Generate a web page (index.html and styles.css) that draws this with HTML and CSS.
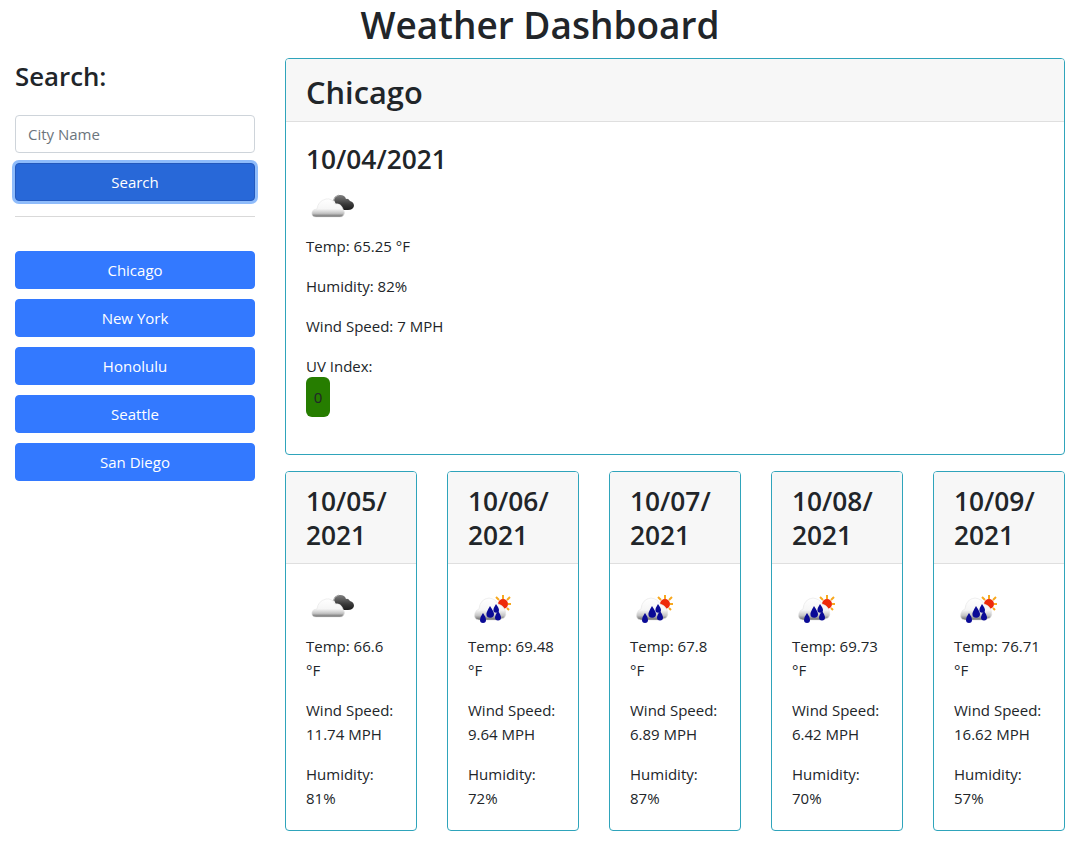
FILE: index.html
```html
<!DOCTYPE html>
<html lang="en">
<head>
    <meta charset="UTF-8">
    <meta name="viewport" content="width=device-width, initial-scale=1.0">
    <title>Weather Dashboard</title>
    <link rel="stylesheet" href="styles.css">
</head>
<body>
    <svg class="defs" width="0" height="0">
        <defs>
            <linearGradient id="cloud-fill" x1="0" y1="0" x2="0" y2="1">
                <stop offset="0" stop-color="#ffffff"/>
                <stop offset="0.55" stop-color="#f6f6f6"/>
                <stop offset="0.8" stop-color="#c4c4c4"/>
                <stop offset="1" stop-color="#666666"/>
            </linearGradient>
            <linearGradient id="dark-fill" x1="0" y1="0" x2="0" y2="1">
                <stop offset="0" stop-color="#808080"/>
                <stop offset="0.6" stop-color="#3a3a3a"/>
                <stop offset="1" stop-color="#1c1c1c"/>
            </linearGradient>
            <symbol id="icon-cloudy" viewBox="0 0 50 50">
                <path d="M28 16 Q29 11 34 11 Q39 11 40 15 Q42 14 44 17 Q48 18 48 22 Q47 26 42 26 L34 26 Q30 22 28 16 Z" fill="url(#dark-fill)"/>
                <path d="M27 17 Q28 12 33 11" fill="none" stroke="#aaaaaa" stroke-width="1"/>
                <path d="M10 33 Q5 33 6 28 Q7 25 11 25 Q12 17 20 15 Q26 14 29 20 Q35 19 37 25 Q40 29 37 32 Q36 33 34 33 Z" fill="url(#cloud-fill)" stroke="#e4e4e4" stroke-width="0.6"/>
            </symbol>
            <symbol id="icon-rain" viewBox="0 0 50 50">
                <g stroke="#f7a81f" stroke-width="2">
                    <path d="M35 11 V15 M42 13 L39 16 M43 20 H40 M41 26 L39 24 M28 13 L31 16"/>
                </g>
                <circle cx="35" cy="20" r="5" fill="#ee2a0a"/>
                <path d="M11 36 Q5 35 7 29 Q8 26 11 25 Q12 15 21 14 Q28 15 30 20 Q35 21 37 26 Q39 31 36 34 L30 36 Z" fill="url(#cloud-fill)" stroke="#e4e4e4" stroke-width="0.6"/>
                <path d="M22 22 Q26 28 26 30 A3.8 3.8 0 0 1 18.4 30 Q18.4 28 22 22 Z" fill="#0a0a96"/>
                <path d="M28 20 Q31 24 31 26 A2.6 2.6 0 0 1 25.4 26 Q25.4 24 28 20 Z" fill="#0a0a96"/>
                <path d="M15 29 Q18 33 18 36 A3 3 0 0 1 12 36 Q12 33 15 29 Z" fill="#0a0a96"/>
                <path d="M30 27 Q33 31 33 33.5 A3 3 0 0 1 27 33.5 Q27 31 30 27 Z" fill="#0a0a96"/>
            </symbol>
        </defs>
    </svg>

    <h1 class="page-title">Weather Dashboard</h1>

    <div class="layout">
        <aside class="sidebar">
            <h2 class="search-title">Search:</h2>
            <input class="city-input" type="text" placeholder="City Name">
            <button class="btn btn-search">Search</button>
            <hr class="divider">
            <div class="history">
                <button class="btn">Chicago</button>
                <button class="btn">New York</button>
                <button class="btn">Honolulu</button>
                <button class="btn">Seattle</button>
                <button class="btn">San Diego</button>
            </div>
        </aside>

        <main class="content">
            <section class="card">
                <div class="card-header"><h2>Chicago</h2></div>
                <div class="card-body today">
                    <h3>10/04/2021</h3>
                    <svg class="icon"><use href="#icon-cloudy"/></svg>
                    <p>Temp: 65.25 °F</p>
                    <p>Humidity: 82%</p>
                    <p>Wind Speed: 7 MPH</p>
                    <p class="uv-label">UV Index:</p>
                    <span class="uv-badge">0</span>
                </div>
            </section>

            <div class="forecast">
                <section class="card">
                    <div class="card-header"><h3>10/05/ 2021</h3></div>
                    <div class="card-body">
                        <svg class="icon"><use href="#icon-cloudy"/></svg>
                        <p>Temp: 66.6 °F</p>
                        <p>Wind Speed: 11.74 MPH</p>
                        <p>Humidity: 81%</p>
                    </div>
                </section>
                <section class="card">
                    <div class="card-header"><h3>10/06/ 2021</h3></div>
                    <div class="card-body">
                        <svg class="icon"><use href="#icon-rain"/></svg>
                        <p>Temp: 69.48 °F</p>
                        <p>Wind Speed: 9.64 MPH</p>
                        <p>Humidity: 72%</p>
                    </div>
                </section>
                <section class="card">
                    <div class="card-header"><h3>10/07/ 2021</h3></div>
                    <div class="card-body">
                        <svg class="icon"><use href="#icon-rain"/></svg>
                        <p>Temp: 67.8 °F</p>
                        <p>Wind Speed: 6.89 MPH</p>
                        <p>Humidity: 87%</p>
                    </div>
                </section>
                <section class="card">
                    <div class="card-header"><h3>10/08/ 2021</h3></div>
                    <div class="card-body">
                        <svg class="icon"><use href="#icon-rain"/></svg>
                        <p>Temp: 69.73 °F</p>
                        <p>Wind Speed: 6.42 MPH</p>
                        <p>Humidity: 70%</p>
                    </div>
                </section>
                <section class="card">
                    <div class="card-header"><h3>10/09/ 2021</h3></div>
                    <div class="card-body">
                        <svg class="icon"><use href="#icon-rain"/></svg>
                        <p>Temp: 76.71 °F</p>
                        <p>Wind Speed: 16.62 MPH</p>
                        <p>Humidity: 57%</p>
                    </div>
                </section>
            </div>
        </main>
    </div>
</body>
</html>
```

FILE: styles.css
```css
* {
    box-sizing: border-box;
}

body {
    margin: 0;
    font-family: "Open Sans", "Noto Sans", sans-serif;
    font-size: 15px;
    line-height: 24px;
    color: #212529;
    background-color: #ffffff;
}

h1, h2, h3, p {
    margin: 0;
    font-weight: 600;
}

.defs {
    display: block;
}

.page-title {
    font-size: 37px;
    line-height: 50px;
    text-align: center;
    margin-bottom: 8px;
    padding-left: 2px;
}

.layout {
    display: flex;
    padding: 0 13px 0 15px;
    gap: 30px;
}

.sidebar {
    width: 240px;
    flex-shrink: 0;
}

.search-title {
    font-size: 25.8px;
    line-height: 36px;
    margin-bottom: 21px;
}

.city-input {
    display: block;
    width: 100%;
    height: 38px;
    padding: 6px 12px;
    font: inherit;
    color: #495057;
    border: 1px solid #ced4da;
    border-radius: 4px;
}

.city-input::placeholder {
    color: #6c757d;
    opacity: 1;
}

.btn {
    display: block;
    width: 100%;
    height: 38px;
    font: inherit;
    color: #ffffff;
    background-color: #3379ff;
    border: 1px solid #3379ff;
    border-radius: 4px;
}

.btn-search {
    margin-top: 10px;
    background-color: #2868d8;
    border-color: #2459bd;
    box-shadow: 0 0 0 3px #8fbcfb;
}

.divider {
    margin: 15px 0 34px;
    border: 0;
    border-top: 1px solid #d9d9d9;
}

.history {
    display: flex;
    flex-direction: column;
    gap: 10px;
}

.content {
    width: 780px;
    flex-shrink: 0;
}

.card {
    border: 1px solid #2fa4bb;
    border-radius: 4px;
    overflow: hidden;
}

.card-header {
    padding: 12px 20px 11px;
    background-color: #f7f7f7;
    border-bottom: 1px solid #dfdfdf;
}

.card-header h2 {
    font-size: 30.8px;
    line-height: 38px;
    padding-top: 2px;
    margin-bottom: -1px;
}

.card-header h3 {
    font-size: 26.3px;
    line-height: 34px;
}

.card-body {
    padding: 20px;
}

.card-body h3 {
    font-size: 26.3px;
    line-height: 34px;
}

.card-body p {
    font-weight: 400;
    margin-bottom: 16px;
}

.icon {
    display: block;
    width: 50px;
    height: 50px;
}

.today {
    height: 332px;
}

.today .icon {
    margin-top: 8px;
}

.today .uv-label {
    margin-bottom: -1px;
}

.uv-badge {
    display: block;
    width: 24px;
    height: 40px;
    line-height: 40px;
    text-align: center;
    background-color: #267d00;
    border-radius: 6px;
}

.forecast {
    display: flex;
    justify-content: space-between;
    margin-top: 16px;
}

.forecast .card {
    width: 132px;
    height: 360px;
}
```
